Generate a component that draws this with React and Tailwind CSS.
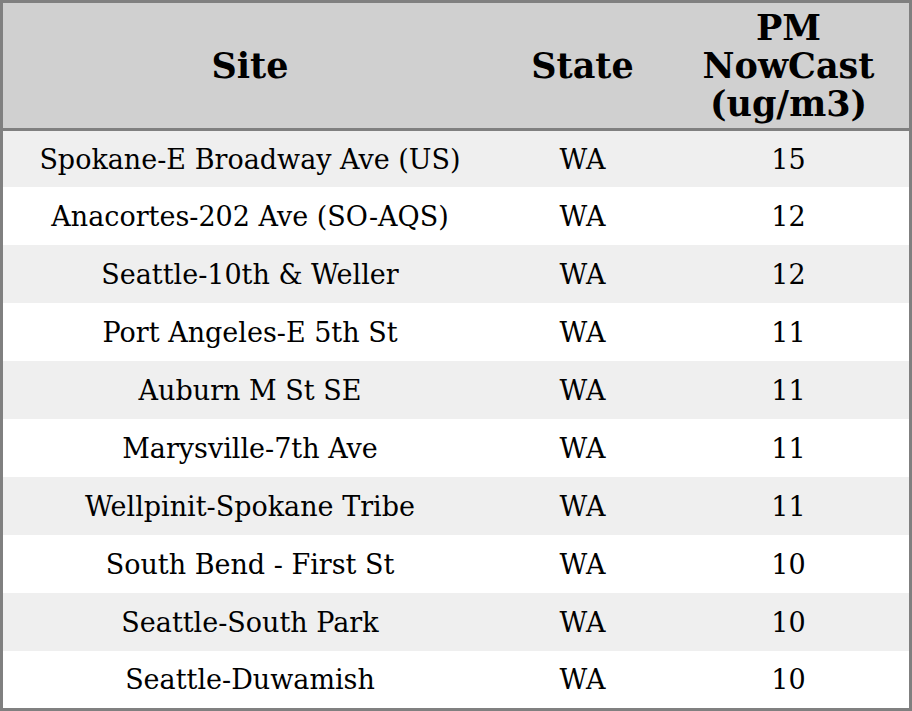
import React from "react";

const rows = [
  ["Spokane-E Broadway Ave (US)", "WA", 15],
  ["Anacortes-202 Ave (SO-AQS)", "WA", 12],
  ["Seattle-10th & Weller", "WA", 12],
  ["Port Angeles-E 5th St", "WA", 11],
  ["Auburn M St SE", "WA", 11],
  ["Marysville-7th Ave", "WA", 11],
  ["Wellpinit-Spokane Tribe", "WA", 11],
  ["South Bend - First St", "WA", 10],
  ["Seattle-South Park", "WA", 10],
  ["Seattle-Duwamish", "WA", 10],
];

// row heights as measured in the screenshot
const heights = ["h-[56px]", "h-[58px]", "h-[58px]", "h-[58px]", "h-[58px]", "h-[58px]", "h-[58px]", "h-[58px]", "h-[58px]", "h-[57px]"];

export default function App() {
  return (
    <div className="w-[912px] h-[711px] overflow-hidden bg-white border-[3px] border-[#808080] font-['DejaVu_Serif',serif] text-black">
      <table className="w-[906px] table-fixed border-separate border-spacing-0">
        <colgroup>
          <col className="w-[494px]" />
          <col className="w-[171px]" />
          <col className="w-[241px]" />
        </colgroup>
        <thead>
          <tr className="bg-[#d0d0d0]">
            <th className="h-[128px] p-0 border-b-[3px] border-[#808080] text-[35px] leading-[38px] font-bold text-center align-middle">Site</th>
            <th className="h-[128px] p-0 border-b-[3px] border-[#808080] text-[35px] leading-[38px] font-bold text-center align-middle">State</th>
            <th className="h-[128px] p-0 border-b-[3px] border-[#808080] text-[35px] leading-[38px] font-bold text-center align-middle">
              PM
              <br />
              NowCast
              <br />
              (ug/m3)
            </th>
          </tr>
        </thead>
        <tbody>
          {rows.map((r, i) => (
            <tr key={i} className={i % 2 === 0 ? "bg-[#efefef]" : "bg-white"}>
              <td className={`${heights[i]} p-0 text-[27px] leading-none text-center align-middle`}>{r[0]}</td>
              <td className={`${heights[i]} p-0 text-[27px] leading-none text-center align-middle`}>{r[1]}</td>
              <td className={`${heights[i]} p-0 text-[27px] leading-none text-center align-middle`}>{r[2]}</td>
            </tr>
          ))}
        </tbody>
      </table>
    </div>
  );
}
